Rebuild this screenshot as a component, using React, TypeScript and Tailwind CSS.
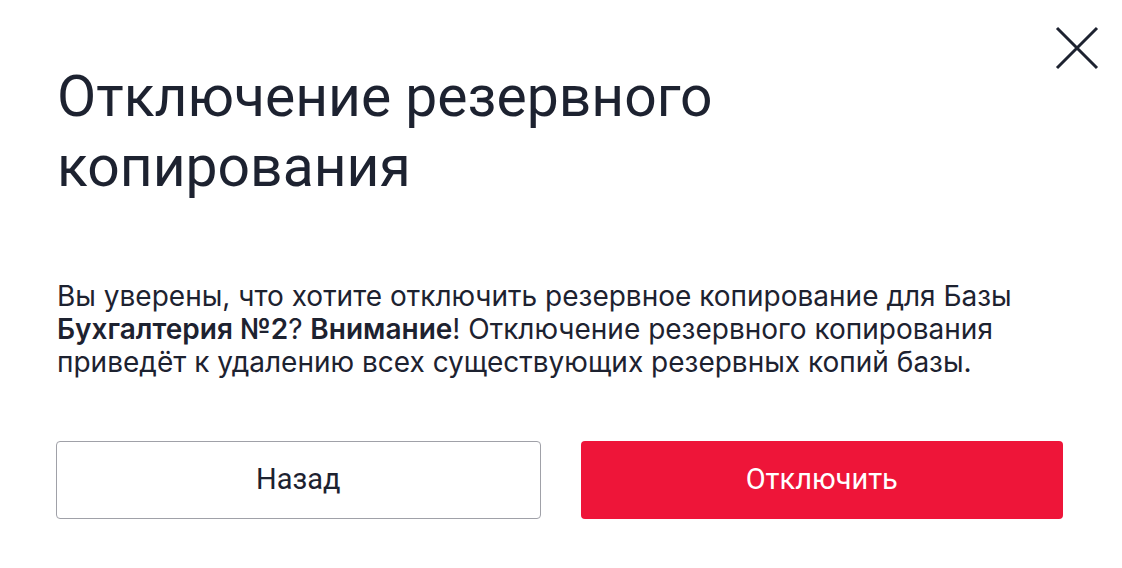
export default function App() {
  return (
    <div className="w-[1122px] h-[568px] bg-white relative text-[#1d2230]">
      <button className="absolute left-[1055px] top-[26px] w-[44px] h-[44px]" aria-label="Закрыть">
        <svg width="44" height="44" viewBox="0 0 44 44" fill="none" stroke="#1d2230" strokeWidth="3">
          <path d="M2 2L42 42M42 2L2 42" />
        </svg>
      </button>
      <div className="pl-[56px] pt-[62px] w-[1063px]">
        <h1 className="pl-px font-['Roboto',sans-serif] text-[57px] leading-[70px] font-normal">
          Отключение резервного
          <br />
          копирования
        </h1>
        <p className="mt-[78px] pl-px font-['Inter',sans-serif] text-[28px] leading-[33px]">
          Вы уверены, что хотите отключить резервное копирование для Базы{' '}
          <b className="font-semibold">Бухгалтерия №2</b>? <b className="font-semibold">Внимание</b>! Отключение резервного копирования приведёт к удалению всех существующих резервных копий базы.
        </p>
        <div className="mt-[62px] flex gap-[40px] font-['Roboto',sans-serif] text-[29px]">
          <button className="flex-1 h-[78px] rounded-[4px] border border-[#a0a1a8] bg-white text-[#1d2230]">
            Назад
          </button>
          <button className="flex-1 h-[78px] rounded-[4px] bg-[#ee1539] text-white">
            Отключить
          </button>
        </div>
      </div>
    </div>
  );
}
